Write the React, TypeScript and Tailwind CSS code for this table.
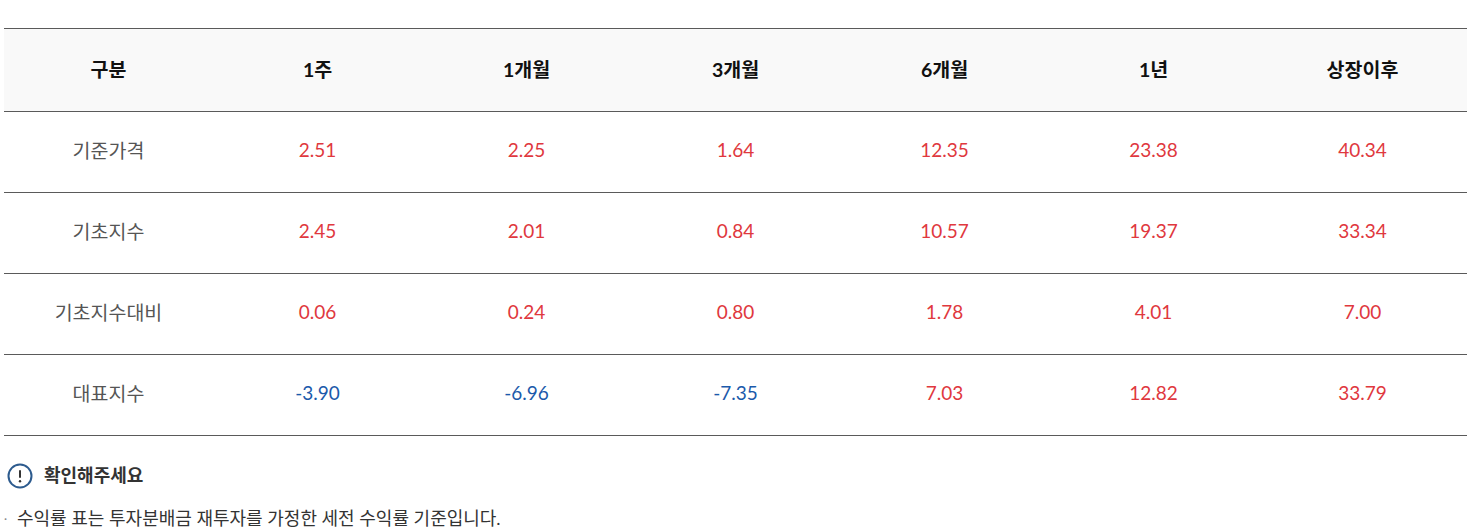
const headers = ["구분", "1주", "1개월", "3개월", "6개월", "1년", "상장이후"];

const rows: { label: string; values: string[] }[] = [
  { label: "기준가격", values: ["2.51", "2.25", "1.64", "12.35", "23.38", "40.34"] },
  { label: "기초지수", values: ["2.45", "2.01", "0.84", "10.57", "19.37", "33.34"] },
  { label: "기초지수대비", values: ["0.06", "0.24", "0.80", "1.78", "4.01", "7.00"] },
  { label: "대표지수", values: ["-3.90", "-6.96", "-7.35", "7.03", "12.82", "33.79"] },
];

export default function App() {
  return (
    <div className="min-h-[532px] bg-white pt-[28px] pl-[4px] pr-[8px] font-['Lato','Noto_Sans_CJK_KR',sans-serif]">
      <table className="w-full table-fixed border-collapse">
        <thead>
          <tr className="h-[83px] border-t border-b border-[#5a5a5a] bg-[#f9f9f9]">
            {headers.map((h) => (
              <th key={h} className="text-center text-[19.5px] font-bold text-[#111]">
                {h}
              </th>
            ))}
          </tr>
        </thead>
        <tbody>
          {rows.map((r) => (
            <tr key={r.label} className="h-[81px] border-b border-[#5a5a5a]">
              <td className="pb-[2px] text-center text-[19.5px] text-[#555]">{r.label}</td>
              {r.values.map((v, i) => (
                <td
                  key={i}
                  className={
                    v.startsWith("-")
                      ? "pb-[3px] text-center text-[19px] text-[#1b5aab]"
                      : "pb-[3px] text-center text-[19px] text-[#e0383e]"
                  }
                >
                  {v}
                </td>
              ))}
            </tr>
          ))}
        </tbody>
      </table>

      <div className="mt-[26px] flex items-center gap-[11px] pl-[3px]">
        <svg width="26" height="26" viewBox="0 0 26 26">
          <circle cx="13" cy="13" r="11.5" fill="none" stroke="#2d5b8e" strokeWidth="2" />
          <rect x="12" y="7" width="2" height="8" rx="1" fill="#333" />
          <circle cx="13" cy="18.2" r="1.2" fill="#333" />
        </svg>
        <span className="text-[18px] font-bold text-[#333]">확인해주세요</span>
      </div>
      <div className="mt-[16px] flex items-center text-[18px] text-[#333]">
        <span className="w-[13px] text-[12px] text-[#888]">·</span>
        <span>수익률 표는 투자분배금 재투자를 가정한 세전 수익률 기준입니다.</span>
      </div>
    </div>
  );
}
